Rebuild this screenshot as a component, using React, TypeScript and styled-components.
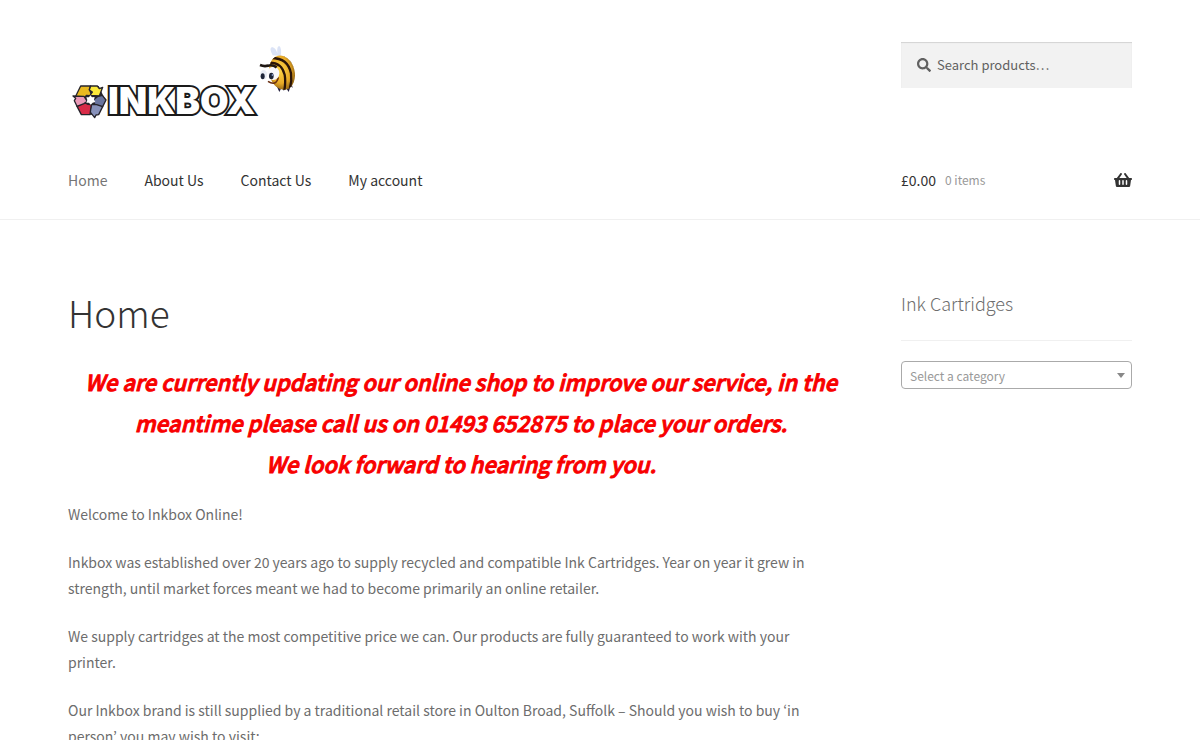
import React from "react";
import styled, { createGlobalStyle } from "styled-components";
import { FaSearch, FaShoppingBasket } from "react-icons/fa";

const GlobalStyle = createGlobalStyle`
  *, *::before, *::after { box-sizing: border-box; }
  body {
    margin: 0;
    background: #fff;
    color: #6d6d6d;
    font-family: "Source Sans Pro", "Noto Sans CJK KR", "Open Sans", sans-serif;
    font-size: 14px;
    line-height: 26px;
  }
`;

const Container = styled.div`
  max-width: 1064px;
  margin: 0 auto;
`;

const SiteHeader = styled.header`
  padding-top: 42px;
  border-bottom: 1px solid #f0f0f0;
`;

const Columns = styled.div`
  display: grid;
  grid-template-columns: minmax(0, 1fr) 231px;
  column-gap: 47px;
`;

const HeaderTop = styled(Columns)`
  align-items: start;
  min-height: 112px;
`;

const HeaderBottom = styled(Columns)`
  align-items: center;
  height: 52px;
  margin-bottom: 13px;
`;

const LogoLink = styled.a`
  display: block;
  width: 232px;
`;

const LogoArt = styled.svg`
  display: block;
  width: 100%;
`;

const LogoText = styled.text`
  font: 900 37px Inter, "Liberation Sans", Arial, sans-serif;
  fill: #fff;
  stroke: #1a1a1a;
  stroke-width: 4px;
  stroke-linejoin: miter;
  paint-order: stroke;
`;

const SearchForm = styled.form`
  display: flex;
  align-items: center;
  height: 46px;
  padding: 0 16px 1px;
  gap: 6px;
  background: #f2f2f2;
  box-shadow: inset 0 1px 1px rgba(0, 0, 0, 0.13);
  font-size: 14px;
`;

const SearchField = styled.input`
  flex: 1;
  min-width: 0;
  border: 0;
  padding: 0;
  outline: 0;
  background: transparent;
  color: #43454b;
  font-family: inherit;
  font-size: 13px;
  &::placeholder {
    color: #616161;
    opacity: 1;
  }
`;

const NavList = styled.ul`
  display: flex;
  gap: 37px;
  margin: 0;
  padding: 0;
  list-style: none;
`;

const NavLink = styled.a<{ $current?: boolean }>`
  color: ${(p) => (p.$current ? "#757575" : "#333")};
  text-decoration: none;
`;

const CartLink = styled.a`
  display: flex;
  align-items: center;
  color: #333;
  text-decoration: none;
`;

const CartCount = styled.span`
  flex: 1;
  margin-left: 9px;
  color: #999;
  font-size: 12px;
`;

const Body = styled(Columns)`
  padding-top: 67px;
`;

const PageTitle = styled.h1`
  margin: 0 0 24px;
  color: #333;
  font-size: 37px;
  font-weight: 300;
  line-height: 50px;
`;

const Notice = styled.h3`
  margin: 0 0 17px;
  color: #f80000;
  font-size: 22px;
  font-style: italic;
  font-weight: 500;
  line-height: 41px;
  text-align: center;
  -webkit-text-stroke: 1px #f80000;
`;

const Paragraph = styled.p`
  margin: 0 0 22px;
  padding-right: 24px;
`;

const WidgetTitle = styled.h2`
  margin: 0 0 20px;
  padding: 2px 0 23px;
  border-bottom: 1px solid #f0f0f0;
  color: #6d6d6d;
  font-size: 18px;
  font-weight: 300;
  line-height: 28px;
`;

const SelectWrap = styled.div`
  position: relative;
`;

const CategorySelect = styled.select`
  display: block;
  width: 100%;
  height: 28px;
  padding: 0 24px 0 8px;
  border: 1px solid #aaa;
  border-radius: 4px;
  appearance: none;
  background: #fff;
  color: #999;
  font-family: inherit;
  font-size: 12px;
`;

const SelectArrow = styled.span`
  position: absolute;
  top: 12px;
  right: 7px;
  border: 4px solid transparent;
  border-top: 5px solid #888;
  border-bottom: 0;
  pointer-events: none;
`;

const links = ["Home", "About Us", "Contact Us", "My account"];

function Logo() {
  return (
    <LogoArt viewBox="24 18 696 240" role="img" aria-label="Inkbox">
      <defs>
        <radialGradient id="beeBody" cx="0.45" cy="0.4" r="0.62">
          <stop offset="0" stopColor="#ffd649" />
          <stop offset="0.65" stopColor="#e8aa26" />
          <stop offset="1" stopColor="#8f6214" />
        </radialGradient>
        <clipPath id="beeClip">
          <ellipse cx="666" cy="110" rx="38" ry="52" transform="rotate(-14 666 110)" />
        </clipPath>
      </defs>

      <path d="M62 150 H116 L136 192 L116 236 H64 L44 194 Z" fill="#26242c" />
      <g stroke="#26242c" strokeWidth="4" strokeLinejoin="round">
        <path d="M62 150 H92 L88 160 L96 180 L80 178 L72 186 L47 181 Z" fill="#e9b920" />
        <path d="M92 150 H112 L118 158 L128 154 L118 180 L90 178 L97 168 L88 162 Z" fill="#fbe83a" />
        <path d="M112 182 L127 178 L138 192 L128 212 L106 210 L100 192 Z" fill="#69749e" />
        <path d="M128 212 L116 236 L108 237 L104 245 L89 226 L95 206 L110 206 Z" fill="#8791ba" />
        <path d="M94 206 L90 236 L64 236 L51 211 L74 200 L84 205 Z" fill="#d82b48" />
        <path d="M51 211 L43 194 L47 187 L39 180 L72 181 L82 196 L72 203 Z" fill="#ec9ab8" />
      </g>
      <path
        d="M91 178 L96 184 L104 183 L102 191 L106 198 L98 200 L92 206 L87 200 L79 200 L82 192 L79 184 L87 184 Z"
        fill="#fff"
      />

      <g transform="scale(3)">
        <LogoText x="48" y="78">
          INKBOX
        </LogoText>
      </g>

      <path
        d="M638 58 Q626 36 636 33 Q648 36 652 52 Q650 30 658 30 Q666 38 662 60 Z"
        fill="#dbe3f6"
      />
      <path
        d="M650 150 L658 168 L664 156 L672 164 L676 152 L686 168 L692 150 L698 156 L694 138 L660 142 Z"
        fill="#25213f"
      />
      <ellipse cx="666" cy="110" rx="38" ry="52" transform="rotate(-14 666 110)" fill="url(#beeBody)" />
      <g clipPath="url(#beeClip)" fill="none" stroke="#2a1408">
        <path d="M622 80 Q664 76 674 116 Q678 140 672 168" strokeWidth="7" />
        <path d="M634 66 Q684 66 693 112 Q696 134 690 156" strokeWidth="7" />
        <path d="M664 56 Q694 62 708 104" strokeWidth="3" />
      </g>
      <path d="M624 136 Q648 152 655 124" fill="none" stroke="#6a2f12" strokeWidth="5" />
      <ellipse cx="611" cy="116" rx="10" ry="14" fill="#e8ecf5" />
      <ellipse cx="640" cy="112" rx="18" ry="20" fill="#f8f8fc" />
      <ellipse cx="608" cy="121" rx="6" ry="9" fill="#1d2438" />
      <ellipse cx="634" cy="120" rx="7" ry="10" fill="#1d2438" />
      <ellipse cx="637" cy="117" rx="2" ry="3" fill="#8fa7d8" />
      <path d="M600 87 Q612 92 624 89 Q638 85 650 94" fill="none" stroke="#1f1712" strokeWidth="8" />
    </LogoArt>
  );
}

export default function App() {
  return (
    <>
      <GlobalStyle />
      <SiteHeader>
        <Container>
          <HeaderTop>
            <LogoLink href="#home">
              <Logo />
            </LogoLink>
            <SearchForm role="search">
              <FaSearch color="#616161" aria-hidden />
              <SearchField type="search" aria-label="Search for products" placeholder="Search products…" />
            </SearchForm>
          </HeaderTop>
          <HeaderBottom>
            <nav aria-label="Primary">
              <NavList>
                {links.map((label, i) => (
                  <li key={label}>
                    <NavLink href="#" $current={i === 0}>
                      {label}
                    </NavLink>
                  </li>
                ))}
              </NavList>
            </nav>
            <CartLink href="#cart">
              £0.00
              <CartCount>0 items</CartCount>
              <FaShoppingBasket size={18} aria-label="View basket" />
            </CartLink>
          </HeaderBottom>
        </Container>
      </SiteHeader>
      <Container>
        <Body>
          <main>
            <PageTitle>Home</PageTitle>
            <Notice>
              We are currently updating our online shop to improve our service, in the
              <br />
              meantime please call us on 01493 652875 to place your orders.
              <br />
              We look forward to hearing from you.
            </Notice>
            <Paragraph>Welcome to Inkbox Online!</Paragraph>
            <Paragraph>
              Inkbox was established over 20 years ago to supply recycled and compatible Ink
              Cartridges. Year on year it grew in strength, until market forces meant we had to
              become primarily an online retailer.
            </Paragraph>
            <Paragraph>
              We supply cartridges at the most competitive price we can. Our products are fully
              guaranteed to work with your printer.
            </Paragraph>
            <Paragraph>
              Our Inkbox brand is still supplied by a traditional retail store in Oulton Broad,
              Suffolk – Should you wish to buy ‘in person’ you may wish to visit:
            </Paragraph>
          </main>
          <aside>
            <WidgetTitle id="category-title">Ink Cartridges</WidgetTitle>
            <SelectWrap>
              <CategorySelect aria-labelledby="category-title" defaultValue="">
                <option value="">Select a category</option>
              </CategorySelect>
              <SelectArrow />
            </SelectWrap>
          </aside>
        </Body>
      </Container>
    </>
  );
}
